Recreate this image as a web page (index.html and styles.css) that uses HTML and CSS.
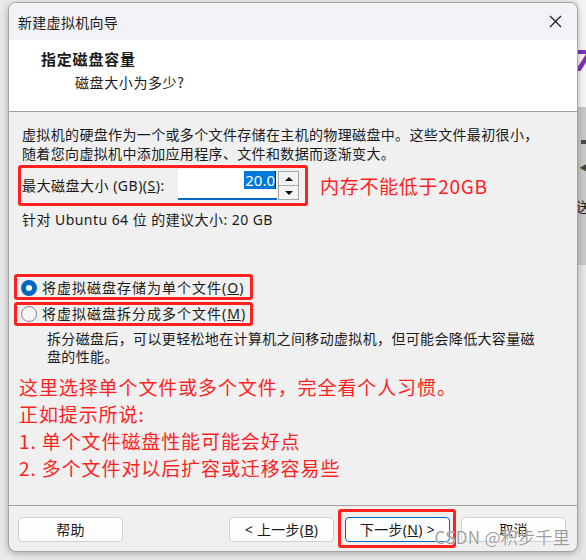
FILE: index.html
```html
<!DOCTYPE html>
<html lang="zh-CN">
<head>
<meta charset="utf-8">
<title>新建虚拟机向导</title>
<link rel="stylesheet" href="styles.css">
</head>
<body>
<div class="desk">
  <div class="gutter-left"></div>
  <div class="dialog">
    <div class="titlebar">
      <span class="title">新建虚拟机向导</span>
      <svg class="close" width="13" height="13" viewBox="0 0 13 13"><path d="M1 1 L12 12 M12 1 L1 12" stroke="#1b1b1b" stroke-width="1.2" fill="none"/></svg>
    </div>
    <div class="header">
      <div class="h-title">指定磁盘容量</div>
      <div class="h-sub">磁盘大小为多少?</div>
    </div>
    <div class="content">
      <p class="intro">虚拟机的硬盘作为一个或多个文件存储在主机的物理磁盘中。这些文件最初很小，<br>随着您向虚拟机中添加应用程序、文件和数据而逐渐变大。</p>
      <div class="size-row">
        <div class="size-box">
          <span class="label">最大磁盘大小 (GB)(<u>S</u>):</span>
          <div class="spin-input"><span class="sel">20.0</span><span class="caret"></span></div>
          <div class="spinner"><span class="spin-btn"><span class="tri-up"></span></span><span class="spin-btn"><span class="tri-down"></span></span></div>
        </div>
        <span class="note">内存不能低于20GB</span>
      </div>
      <p class="recommend">针对 Ubuntu 64 位 的建议大小: 20 GB</p>
      <div class="radio-group">
        <div class="radio first"><span class="dot checked"></span><span>将虚拟磁盘存储为单个文件(<u>O</u>)</span></div>
        <div class="radio second"><span class="dot"></span><span>将虚拟磁盘拆分成多个文件(<u>M</u>)</span></div>
      </div>
      <p class="desc">拆分磁盘后，可以更轻松地在计算机之间移动虚拟机，但可能会降低大容量磁<br>盘的性能。</p>
      <div class="notes">
        <p>这里选择单个文件或多个文件，完全看个人习惯。</p>
        <p>正如提示所说:</p>
        <p>1. 单个文件磁盘性能可能会好点</p>
        <p>2. 多个文件对以后扩容或迁移容易些</p>
      </div>
    </div>
    <div class="footer">
      <span class="btn">帮助</span>
      <span class="spacer"></span>
      <span class="btn">&lt; 上一步(<u>B</u>)</span>
      <span class="btn-wrap"><span class="btn primary">下一步(<u>N</u>) &gt;</span></span>
      <span class="btn">取消</span>
    </div>
    <div class="watermark">CSDN @积步千里</div>
  </div>
  <div class="gutter-right">
    <div class="gr-top"><span class="seven">7</span></div>
    <div class="gr-mid"><span class="sq"></span><span class="arrow">◀</span><span class="ch">送</span></div>
    <div class="gr-bot"></div>
  </div>
</div>
</body>
</html>
```

FILE: styles.css
```css
html, body {
  margin: 0;
  padding: 0;
  width: 586px;
  height: 560px;
  overflow: hidden;
  background: #ebebeb;
  font-family: "Noto Sans", "Noto Sans CJK SC", sans-serif;
  color: #1a1a1a;
}

.desk {
  display: flex;
  height: 560px;
}

.gutter-left {
  width: 8px;
  flex-shrink: 0;
  background: #e9e9e9;
}

.dialog {
  position: relative;
  width: 570px;
  height: 550px;
  margin-top: 2px;
  flex-shrink: 0;
  box-sizing: border-box;
  border: 1px solid #a5a5a5;
  border-radius: 8px;
  overflow: hidden;
  background: #f0f0f0;
  box-shadow: 0 2px 7px rgba(0, 0, 0, 0.28);
  display: flex;
  flex-direction: column;
}

.titlebar {
  height: 37px;
  flex-shrink: 0;
  background: #f3f2f7;
  display: flex;
  align-items: center;
  justify-content: space-between;
  padding: 0 15px 0 9px;
}

.title {
  font-family: "Noto Sans CJK SC", sans-serif;
  font-size: 14px;
  letter-spacing: 0.3px;
  line-height: 20px;
}

.close {
  display: block;
  margin-top: -1px;
}

.header {
  height: 72px;
  flex-shrink: 0;
  box-sizing: border-box;
  background: #ffffff;
  border-bottom: 1px solid #a0a0a0;
  padding: 9px 0 0 32px;
}

.h-title {
  font-family: "Noto Sans CJK SC", sans-serif;
  font-weight: bold;
  font-size: 15px;
  letter-spacing: 0.8px;
  line-height: 20px;
}

.h-sub {
  font-family: "Noto Sans CJK SC", sans-serif;
  font-size: 14px;
  letter-spacing: 0.6px;
  line-height: 20px;
  margin: 3px 0 0 34px;
}

.content {
  flex: 1;
  padding-left: 13px;
  font-size: 14px;
  letter-spacing: 0.35px;
}

.content p {
  margin: 0;
}

.intro {
  margin-top: 13px !important;
  line-height: 19px;
}

.size-row {
  display: flex;
  align-items: center;
  margin-top: 2px;
  margin-left: -4px;
}

.size-box {
  width: 290px;
  height: 41px;
  box-sizing: border-box;
  border: 3px solid #ff2020;
  border-radius: 3px;
  display: flex;
  align-items: center;
  padding: 0 6px 0 1px;
}

.label {
  flex: 1;
  line-height: 20px;
  white-space: nowrap;
  letter-spacing: 0.5px;
}

.spin-input {
  width: 99px;
  height: 27px;
  background: #ffffff;
  border-bottom: 2px solid #0067c0;
  display: flex;
  justify-content: flex-end;
  align-items: flex-start;
  padding-top: 2px;
  box-sizing: content-box;
  margin-top: -2px;
}

.sel {
  background: #0078d7;
  color: #ffffff;
  font-size: 15px;
  line-height: 18px;
  letter-spacing: 0;
  padding-left: 1px;
}

.caret {
  width: 1px;
  height: 18px;
  background: #1a1a1a;
  margin-right: 1px;
}

.spinner {
  width: 21px;
  height: 29px;
  box-sizing: border-box;
  border: 1px solid #a8a8a8;
  margin-left: 1px;
  display: flex;
  flex-direction: column;
  gap: 1px;
  background: #a8a8a8;
}

.spin-btn {
  flex: 1;
  background: #f3f3f3;
  display: flex;
  align-items: center;
  justify-content: center;
}

.tri-up {
  width: 0;
  height: 0;
  border-left: 4px solid transparent;
  border-right: 4px solid transparent;
  border-bottom: 4px solid #111111;
}

.tri-down {
  width: 0;
  height: 0;
  border-left: 4px solid transparent;
  border-right: 4px solid transparent;
  border-top: 4px solid #111111;
}

.note {
  margin-left: 12px;
  color: #ff1f1f;
  font-family: "Noto Sans CJK SC", sans-serif;
  font-size: 19px;
  letter-spacing: 0.7px;
  line-height: 26px;
}

.recommend {
  margin-top: 4px !important;
  line-height: 19px;
  letter-spacing: 0.45px;
}

.radio-group {
  margin-top: 45px;
  margin-left: -8px;
  display: flex;
  flex-direction: column;
  gap: 2px;
}

.radio {
  width: 239px;
  box-sizing: border-box;
  border: 3px solid #ff2020;
  border-radius: 3px;
  display: flex;
  align-items: center;
  gap: 5px;
  padding-left: 4px;
  line-height: 18px;
  white-space: nowrap;
  letter-spacing: 1px;
}

.radio.first {
  height: 26px;
  padding-top: 2px;
}

.radio.second {
  height: 24px;
}

.dot {
  width: 16px;
  height: 16px;
  box-sizing: border-box;
  border-radius: 50%;
  border: 1px solid #858585;
  background: #f6f6f6;
  flex-shrink: 0;
}

.dot.checked {
  border: 5px solid #0067c0;
  background: #ffffff;
}

.desc {
  margin-top: 4px !important;
  margin-left: 25px !important;
  line-height: 18px;
}

.notes {
  margin-top: 7px;
  margin-left: -3px;
  color: #ff1f1f;
  font-family: "Noto Sans CJK SC", sans-serif;
  font-size: 19px;
  letter-spacing: 0.9px;
  line-height: 27px;
}

.footer {
  height: 46px;
  flex-shrink: 0;
  box-sizing: border-box;
  border-top: 1px solid #a0a0a0;
  padding: 11px 11px 0 9px;
  display: flex;
  align-items: flex-start;
  gap: 11px;
}

.spacer {
  flex: 1;
}

.btn {
  width: 105px;
  height: 25px;
  box-sizing: border-box;
  background: #fdfdfd;
  border: 1px solid #d0d0d0;
  border-radius: 4px;
  display: flex;
  align-items: center;
  justify-content: center;
  font-size: 14px;
  letter-spacing: 0.3px;
  line-height: 20px;
}

.btn-wrap {
  position: relative;
  display: block;
}

.btn-wrap::after {
  content: "";
  position: absolute;
  left: -7px;
  right: -6px;
  top: -8px;
  bottom: -6px;
  border: 3px solid #ff2020;
  border-radius: 3px;
}

.btn.primary {
  border-color: #0067c0;
}

.watermark {
  position: absolute;
  right: 7px;
  bottom: 2px;
  font-family: "Noto Sans CJK SC", sans-serif;
  font-size: 17px;
  letter-spacing: 0.3px;
  color: rgba(120, 120, 120, 0.72);
  text-shadow: 0 0 1px #ffffff, 0 0 1px #ffffff;
  white-space: nowrap;
}

.gutter-right {
  width: 8px;
  flex-shrink: 0;
  display: flex;
  flex-direction: column;
  overflow: hidden;
}

.gr-top {
  height: 107px;
  background: #f5f5f5;
  overflow: hidden;
}

.seven {
  display: block;
  margin: 46px 0 0 -5px;
  font-family: "DejaVu Sans", sans-serif;
  font-weight: bold;
  font-style: italic;
  font-size: 28px;
  line-height: 32px;
  color: #7b35b9;
}

.gr-mid {
  height: 158px;
  background: #c8c8c8;
  display: flex;
  flex-direction: column;
  overflow: hidden;
}

.sq {
  display: block;
  width: 5px;
  height: 4px;
  background: #4a4a4a;
  margin: 33px 0 0 3px;
}

.arrow {
  display: block;
  font-size: 11px;
  line-height: 12px;
  color: #444444;
  margin: 18px 0 0 1px;
}

.ch {
  display: block;
  font-family: "Noto Sans CJK SC", sans-serif;
  font-size: 14px;
  line-height: 16px;
  margin: 24px 0 0 -2px;
  color: #222222;
}

.gr-bot {
  flex: 1;
  background: #e6e6e6;
}
```
